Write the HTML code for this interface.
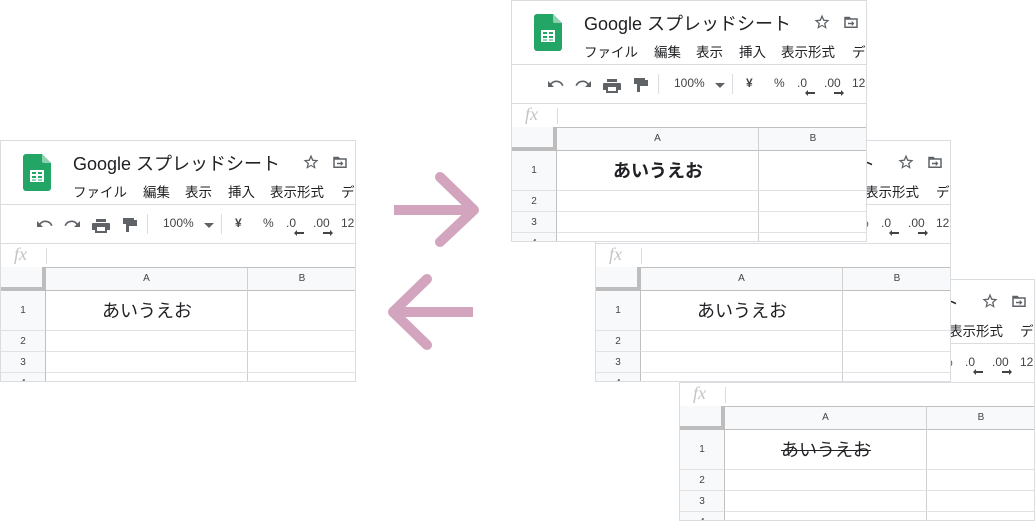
<!DOCTYPE html>
<html><head><meta charset="utf-8"><style>
*{margin:0;padding:0;box-sizing:border-box}
body{width:1035px;height:521px;background:#fff;position:relative;overflow:hidden;font-family:"Liberation Sans","Noto Sans CJK JP",sans-serif;color:#202124}
.p{position:absolute;width:356px;height:242px;background:#fff;border:1px solid #dadce0;overflow:hidden}
.p *{position:absolute}
.t{left:72px;top:9px;font-size:18px;white-space:nowrap}
.m{top:40px;font-size:13.5px;white-space:nowrap}
.hl{left:0;width:356px;height:1px;background:#dadce0}
.tb{top:75px;font-size:12px;color:#444;white-space:nowrap}
.vs{width:1px;background:#dadce0}
.ic{fill:#5f6368}
.hd{top:126px;left:0;width:356px;height:24px;background:#f8f9fa;border-top:1px solid #c0c0c0;border-bottom:1px solid #c0c0c0}
.rn{left:0;width:45px;background:#f8f9fa;font-size:10px;color:#444;text-align:center;border-right:1px solid #c0c0c0;border-bottom:1px solid #e2e2e2}
.v{top:152px;left:46px;width:200px;text-align:center;font-size:18px;line-height:36px}
</style></head><body>

<svg style="position:absolute;left:0;top:0" width="1035" height="521">
<g stroke="#d3a4bd" stroke-width="10" fill="none" stroke-linecap="round" stroke-linejoin="round">
<line x1="394" y1="210" x2="474" y2="210" stroke-linecap="butt"/>
<polyline points="440,177 474,210 440,242"/>
<line x1="393" y1="312" x2="473" y2="312" stroke-linecap="butt"/>
<polyline points="427,279 393,312 427,345"/>
</g></svg>

<div id="panels"></div>

<script>
function panel(x,y,z,cls){
return `<div class="p" style="left:${x}px;top:${y}px;z-index:${z}">
<svg style="left:22px;top:13px" width="28" height="37" viewBox="0 0 28 37"><path d="M3 0h16l9 9v25a3 3 0 0 1-3 3H3a3 3 0 0 1-3-3V3a3 3 0 0 1 3-3z" fill="#23a566"/><path d="M19 0l9 9h-7a2 2 0 0 1-2-2z" fill="#8ed1b1"/><path d="M7 16h14v12H7z M9 18v2h4v-2z M15 18v2h4v-2z M9 22v2h4v-2z M15 22v2h4v-2z" fill="#fff" fill-rule="evenodd"/><path d="M9 25.5h4v1h-4zM15 25.5h4v1h-4z" fill="#23a566"/></svg>
<div class="t">Google スプレッドシート</div>
<svg style="left:301px;top:12px" width="18" height="18" viewBox="0 0 24 24"><path class="ic" d="M12 2l2.9 6.9 7.1.6-5.4 4.7 1.6 7-6.2-3.8-6.2 3.8 1.6-7L2 9.5l7.1-.6z M12 6.5l-1.7 4-4.3.4 3.3 2.8-1 4.3 3.7-2.3 3.7 2.3-1-4.3 3.3-2.8-4.3-.4z" fill-rule="evenodd"/></svg>
<svg style="left:330px;top:12px" width="18" height="18" viewBox="0 0 24 24"><path class="ic" d="M3 5h7l2 2h9v13H3z M5 9v9h14V9z" fill-rule="evenodd"/><path class="ic" d="M8 13h5v-2.5l3.5 3.5-3.5 3.5V15H8z"/></svg>
<div class="m" style="left:72px">ファイル</div><div class="m" style="left:142px">編集</div><div class="m" style="left:184px">表示</div><div class="m" style="left:227px">挿入</div><div class="m" style="left:269px">表示形式</div><div class="m" style="left:340px">デ</div>
<div class="hl" style="top:63px"></div>
<svg style="left:35px;top:76px" width="110" height="16" viewBox="0 0 110 16"><g class="ic"><path d="M1 4v6h6L4.6 7.6A6 6 0 0 1 15 9l1.6-.6A7.7 7.7 0 0 0 3.4 6.4z"/><path d="M44 4v6h-6l2.4-2.4A6 6 0 0 0 30 9l-1.6-.6A7.7 7.7 0 0 1 41.6 6.4z"/><path d="M60 2h10v3H60z M57 6h16a1 1 0 0 1 1 1v6h-3v3H59v-3h-3V7a1 1 0 0 1 1-1z M61 10v4h8v-4z" fill-rule="evenodd"/><path d="M87 1h11v6H87z M98 3h3v6h-8v6h-3V7h8z"/></g></svg>
<div class="vs" style="left:146px;top:73px;height:20px"></div>
<div class="tb" style="left:162px">100%</div>
<svg style="left:203px;top:82px" width="10" height="5"><path class="ic" d="M0 0h10L5 5z"/></svg>
<div class="vs" style="left:220px;top:73px;height:20px"></div>
<div class="tb" style="left:234px;font-weight:bold">¥</div>
<div class="tb" style="left:262px">%</div>
<div class="tb" style="left:285px">.0</div><svg style="left:293px;top:89px" width="10" height="6"><path d="M0 3l3-3v2h7v2H3v2z" fill="#444"/></svg>
<div class="tb" style="left:312px">.00</div><svg style="left:322px;top:89px" width="10" height="6"><path d="M10 3L7 0v2H0v2h7v2z" fill="#444"/></svg>
<div class="tb" style="left:340px">123</div>
<div class="hl" style="top:102px"></div>
<div style="left:13px;top:103px;font-family:'Liberation Serif',serif;font-style:italic;font-size:18px;color:#c4c4c4">fx</div>
<div class="vs" style="left:45px;top:107px;height:16px"></div>
<div class="hd"></div>
<div style="left:0;top:126px;width:45px;height:24px;background:#f8f9fa;border-right:4px solid #bdbdbd;border-bottom:4px solid #bdbdbd"></div>
<div style="left:45px;top:132px;width:201px;text-align:center;font-size:10px;color:#444">A</div>
<div class="vs" style="left:246px;top:127px;height:115px;background:#d0d0d0"></div>
<div style="left:246px;top:132px;width:110px;text-align:center;font-size:10px;color:#444">B</div>
<div class="rn" style="top:150px;height:40px;line-height:40px">1</div>
<div class="rn" style="top:190px;height:21px;line-height:21px">2</div>
<div class="rn" style="top:211px;height:21px;line-height:21px">3</div>
<div class="rn" style="top:232px;height:21px;line-height:21px">4</div>
<div class="hl" style="top:189px;left:45px;background:#e2e2e2"></div>
<div class="hl" style="top:210px;left:45px;background:#e2e2e2"></div>
<div class="hl" style="top:231px;left:45px;background:#e2e2e2"></div>
<div class="v" style="${cls}">あいうえお</div>
</div>`;}
document.getElementById('panels').innerHTML=
panel(0,140,1,'')+panel(679,279,2,'text-decoration:line-through')+panel(595,140,3,'')+panel(511,0,4,'font-weight:bold');
</script>
</body></html>
